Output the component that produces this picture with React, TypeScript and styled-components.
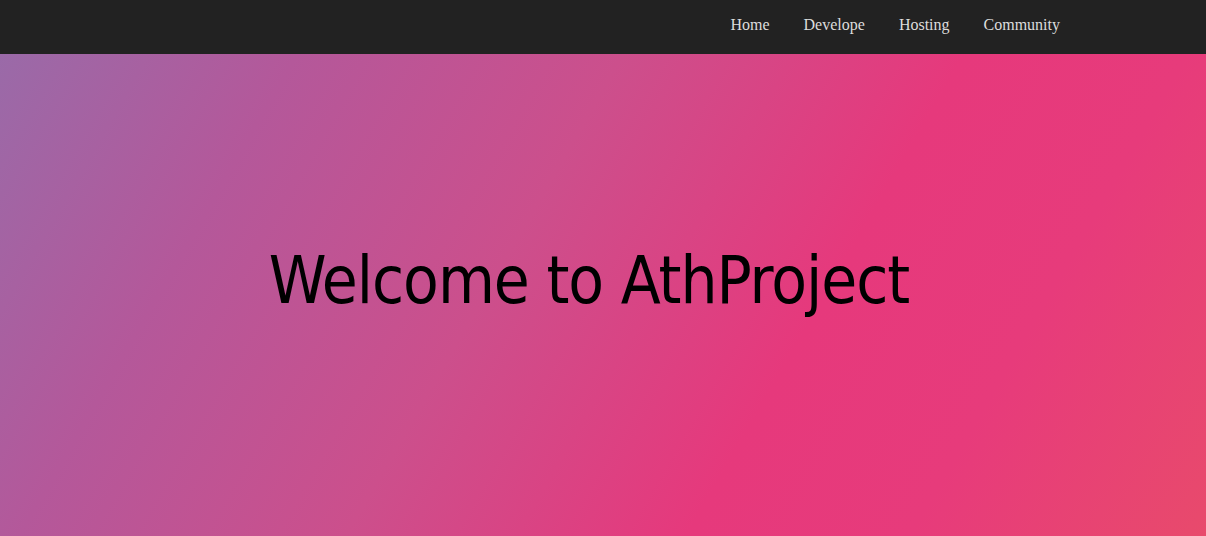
import styled, { createGlobalStyle } from "styled-components";

const GlobalStyle = createGlobalStyle`
  html,
  body {
    margin: 0;
    padding: 0;
    height: 100%;
    overflow: hidden;
  }

  body {
    font-family: "Liberation Serif", "Times New Roman", serif;
  }
`;

const Page = styled.div`
  display: flex;
  flex-direction: column;
  height: 100vh;
`;

const NavBar = styled.nav`
  display: flex;
  justify-content: flex-end;
  align-items: center;
  height: 54px;
  padding: 0 129px 4px 0;
  box-sizing: border-box;
  background: #222222;
`;

const NavList = styled.ul`
  display: flex;
  margin: 0;
  padding: 0;
  list-style: none;
`;

const NavItem = styled.li`
  padding: 0 17px;
`;

const NavLink = styled.a`
  font-family: "Liberation Serif", "Times New Roman", serif;
  font-size: 16px;
  color: #dddddd;
  text-decoration: none;
  cursor: pointer;

  &:hover {
    color: #ffffff;
  }
`;

const Hero = styled.section`
  flex: 1;
  display: flex;
  align-items: center;
  justify-content: center;
  padding: 0 28px 0 0;
  background: linear-gradient(
    120deg,
    #9a6aa8 0%,
    #b4589a 20%,
    #cc4f8c 42%,
    #e6397c 65%,
    #e73b7b 80%,
    #e84a6c 100%
  );
`;

const Title = styled.h1`
  margin: 0 0 30px;
  font-family: "DejaVu Sans Condensed", "DejaVu Sans", sans-serif;
  font-weight: normal;
  font-size: 65px;
  letter-spacing: -1px;
  line-height: 1;
  color: #000000;
`;

const links = ["Home", "Develope", "Hosting", "Community"];

export default function App() {
  return (
    <Page>
      <GlobalStyle />
      <NavBar>
        <NavList>
          {links.map((label) => (
            <NavItem key={label}>
              <NavLink>{label}</NavLink>
            </NavItem>
          ))}
        </NavList>
      </NavBar>
      <Hero>
        <Title>Welcome to AthProject</Title>
      </Hero>
    </Page>
  );
}
